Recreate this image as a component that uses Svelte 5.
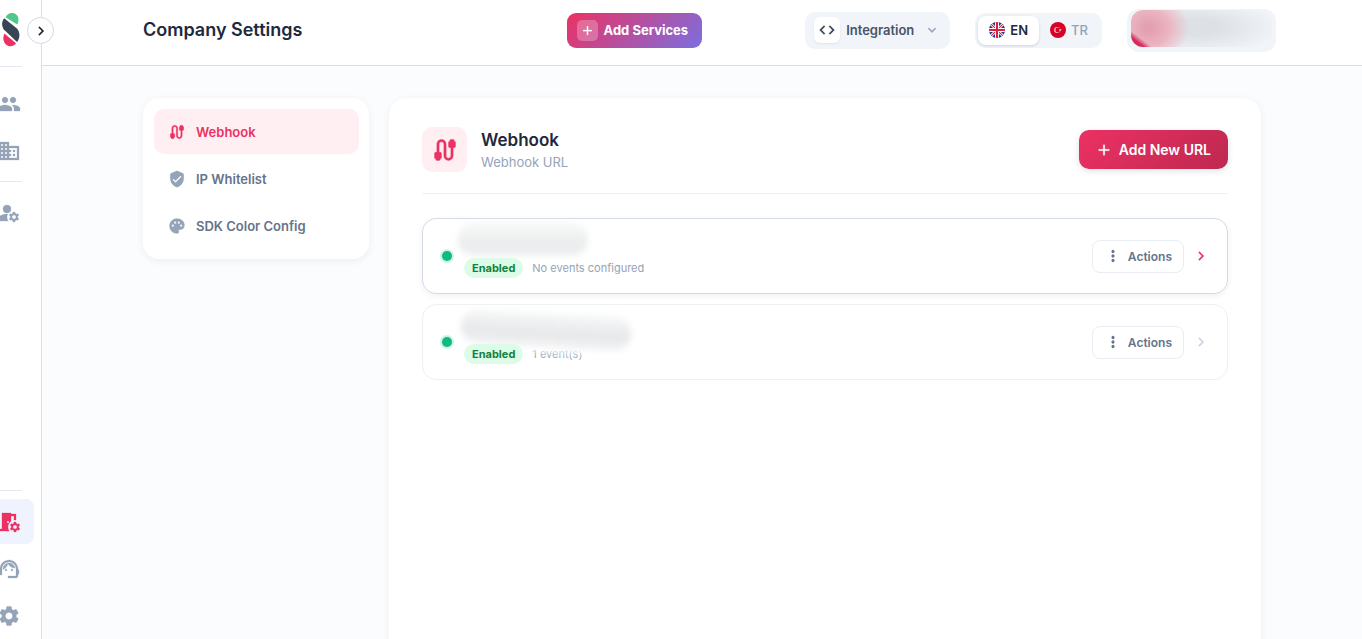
<script>
  const icons = {
    group: 'M16 11c1.66 0 2.99-1.34 2.99-3S17.66 5 16 5c-1.66 0-3 1.34-3 3s1.34 3 3 3zm-8 0c1.66 0 2.99-1.34 2.99-3S9.66 5 8 5C6.34 5 5 6.34 5 8s1.34 3 3 3zm0 2c-2.33 0-7 1.17-7 3.5V19h14v-2.5c0-2.33-4.67-3.5-7-3.5zm8 0c-.29 0-.62.02-.97.05 1.16.84 1.97 1.97 1.97 3.45V19h6v-2.5c0-2.33-4.67-3.5-7-3.5z',
    domain: 'M12 7V3H2v18h20V7H12zM6 19H4v-2h2v2zm0-4H4v-2h2v2zm0-4H4V9h2v2zm0-4H4V5h2v2zm4 12H8v-2h2v2zm0-4H8v-2h2v2zm0-4H8V9h2v2zm0-4H8V5h2v2zm10 12h-8v-2h2v-2h-2v-2h2v-2h-2V9h8v10zm-2-8h-2v2h2v-2zm0 4h-2v2h2v-2z',
    manage: 'M10 4a4 4 0 1 0 0 8 4 4 0 0 0 0-8zM10.67 13.02c-.22-.01-.44-.02-.67-.02-2.42 0-4.68.67-6.61 1.82-.88.52-1.39 1.5-1.39 2.53V20h9.26c-.79-1.13-1.26-2.51-1.26-4 0-1.07.25-2.07.67-2.98zM20.75 16c0-.22-.03-.42-.06-.63l1.14-1.01-1-1.73-1.45.49c-.32-.27-.68-.48-1.08-.63L18 11h-2l-.3 1.49c-.4.15-.76.36-1.08.63l-1.45-.49-1 1.73 1.14 1.01c-.03.21-.06.41-.06.63s.03.42.06.63l-1.14 1.01 1 1.73 1.45-.49c.32.27.68.48 1.08.63L16 21h2l.3-1.49c.4-.15.76-.36 1.08-.63l1.45.49 1-1.73-1.14-1.01c.03-.21.06-.41.06-.63zM17 18c-1.1 0-2-.9-2-2s.9-2 2-2 2 .9 2 2-.9 2-2 2z',
    room: 'M14 11.26V6h3v4h2V4h-5V3H5v16H3v2h9.26c-.79-1.13-1.26-2.51-1.26-4 0-2.38 1.19-4.47 3-5.74zM10 11h2v2h-2v-2zm11.69 5.37l1.14-1-1-1.73-1.45.49c-.32-.27-.68-.48-1.08-.63L19 12h-2l-.3 1.49c-.4.15-.76.36-1.08.63l-1.45-.49-1 1.73 1.14 1c-.08.5-.08.76 0 1.26l-1.14 1 1 1.73 1.45-.49c.32.27.68.48 1.08.63L17 22h2l.3-1.49c.4-.15.76-.36 1.08-.63l1.45.49 1-1.73-1.14-1c.08-.51.08-.77 0-1.27zM18 19c-1.1 0-2-.9-2-2s.9-2 2-2 2 .9 2 2-.9 2-2 2z',
    support: 'M21 12.22C21 6.73 16.74 3 12 3c-4.69 0-9 3.65-9 9.28-.6.34-1 .98-1 1.72v2c0 1.1.9 2 2 2h1v-6.1c0-3.87 3.13-7 7-7s7 3.13 7 7V19h-8v2h8c1.1 0 2-.9 2-2v-1.22c.59-.31 1-.92 1-1.64v-2.3c0-.7-.41-1.31-1-1.62zM9 12a1 1 0 1 0 0 2 1 1 0 0 0 0-2zM15 12a1 1 0 1 0 0 2 1 1 0 0 0 0-2zM18 11.03C17.52 8.18 15.04 6 12.05 6c-3.03 0-6.29 2.51-6.03 6.45 2.47-1.01 4.33-3.21 4.86-5.89 1.31 2.63 4 4.44 7.12 4.47z',
    settings: 'M19.14 12.94c.04-.3.06-.61.06-.94 0-.32-.02-.64-.07-.94l2.03-1.58c.18-.14.23-.41.12-.61l-1.92-3.32c-.12-.22-.37-.29-.59-.22l-2.39.96c-.5-.38-1.03-.7-1.62-.94l-.36-2.54c-.04-.24-.24-.41-.48-.41h-3.84c-.24 0-.43.17-.47.41l-.36 2.54c-.59.24-1.13.57-1.62.94l-2.39-.96c-.22-.08-.47 0-.59.22L2.74 8.87c-.12.21-.08.47.12.61l2.03 1.58c-.05.3-.09.63-.09.94s.02.64.07.94l-2.03 1.58c-.18.14-.23.41-.12.61l1.92 3.32c.12.22.37.29.59.22l2.39-.96c.5.38 1.03.7 1.62.94l.36 2.54c.05.24.24.41.48.41h3.84c.24 0 .44-.17.47-.41l.36-2.54c.59-.24 1.13-.56 1.62-.94l2.39.96c.22.08.47 0 .59-.22l1.92-3.32c.12-.22.07-.47-.12-.61l-2.01-1.58zM12 15.6c-1.98 0-3.6-1.62-3.6-3.6s1.62-3.6 3.6-3.6 3.6 1.62 3.6 3.6-1.62 3.6-3.6 3.6z',
    cable: 'M20 5V4c0-.55-.45-1-1-1h-2c-.55 0-1 .45-1 1v1h-1v4c0 .55.45 1 1 1h1v7c0 1.1-.9 2-2 2s-2-.9-2-2V7c0-2.21-1.79-4-4-4S5 4.79 5 7v7H4c-.55 0-1 .45-1 1v4h1v1c0 .55.45 1 1 1h2c.55 0 1-.45 1-1v-1h1v-4c0-.55-.45-1-1-1H7V7c0-1.1.9-2 2-2s2 .9 2 2v10c0 2.21 1.79 4 4 4s4-1.79 4-4v-7h1c.55 0 1-.45 1-1V5h-1z',
    shield: 'M11.19 1.36l-7 3.11C3.47 4.79 3 5.51 3 6.3V11c0 5.55 3.84 10.74 9 12 5.16-1.26 9-6.45 9-12V6.3c0-.79-.47-1.51-1.19-1.83l-7-3.11c-.51-.23-1.11-.23-1.62 0zM10 17l-4-4 1.41-1.41L10 14.17l6.59-6.59L18 9l-8 8z',
    palette: 'M12 2C6.49 2 2 6.49 2 12s4.49 10 10 10c1.38 0 2.5-1.12 2.5-2.5 0-.61-.23-1.2-.64-1.67-.08-.1-.13-.21-.13-.33 0-.28.22-.5.5-.5H16c3.31 0 6-2.69 6-6 0-4.96-4.49-9-10-9zm-5.5 11c-.83 0-1.5-.67-1.5-1.5S5.67 10 6.5 10 8 10.67 8 11.5 7.33 13 6.5 13zm3-4C8.67 9 8 8.33 8 7.5S8.67 6 9.5 6s1.5.67 1.5 1.5S10.33 9 9.5 9zm5 0c-.83 0-1.5-.67-1.5-1.5S13.67 6 14.5 6s1.5.67 1.5 1.5S15.33 9 14.5 9zm3 4c-.83 0-1.5-.67-1.5-1.5s.67-1.5 1.5-1.5 1.5.67 1.5 1.5-.67 1.5-1.5 1.5z',
    plus: 'M19 13h-6v6h-2v-6H5v-2h6V5h2v6h6v2z',
    code: 'M9.4 16.6 4.8 12l4.6-4.6L8 6l-6 6 6 6 1.4-1.4zm5.2 0 4.6-4.6-4.6-4.6L16 6l6 6-6 6-1.4-1.4z',
    down: 'M7.41 8.59 12 13.17l4.59-4.58L18 10l-6 6-6-6 1.41-1.41z',
    right: 'M10 6 8.59 7.41 13.17 12l-4.58 4.59L10 18l6-6z',
    dots: 'M12 8c1.1 0 2-.9 2-2s-.9-2-2-2-2 .9-2 2 .9 2 2 2zm0 2c-1.1 0-2 .9-2 2s.9 2 2 2 2-.9 2-2-.9-2-2-2zm0 6c-1.1 0-2 .9-2 2s.9 2 2 2 2-.9 2-2-.9-2-2-2z'
  };

  const sections = [
    { icon: 'cable', label: 'Webhook' },
    { icon: 'shield', label: 'IP Whitelist' },
    { icon: 'palette', label: 'SDK Color Config' }
  ];

  const hooks = [
    { status: 'Enabled', events: 'No events configured', selected: true },
    { status: 'Enabled', events: '1 event(s)', selected: false }
  ];

  let section = $state('Webhook');
  let lang = $state('EN');
</script>

{#snippet icon(name, size)}
  <svg width={size} height={size} viewBox="0 0 24 24" fill="currentColor" stroke="currentColor" stroke-width="0.300" aria-hidden="true"><path d={icons[name]} /></svg>
{/snippet}

{#snippet navLink(name, label, active)}
  <a class="nav-link" class:active href="#{name}" aria-label={label}>{@render icon(name, 24)}</a>
{/snippet}

<div class="app">
  <aside class="sidebar">
    <div class="brand">
      <svg width="18" height="36" viewBox="0 0 18 36" aria-hidden="true">
        <path d="M3.500 5.200C5 1.500 9 .300 12 1.200c5 1.700 5.500 7.500 3.200 11.300z" fill="#52c78c" />
        <path d="M2.200 6.200C-.500 9.500-.500 14 1.800 17.500L15 30c3.300-4 3-10 .2-13.300z" fill="#364657" />
        <path d="M2.400 21.500c-2.500 5-.5 11.500 4.800 12.700 3 .5 5.700-1 6.800-2.900z" fill="#ec3163" />
      </svg>
    </div>
    <button class="collapse" aria-label="Expand menu">{@render icon('right', 18)}</button>
    <hr />
    <nav class="upper">
      {@render navLink('group', 'Customers', false)}
      {@render navLink('domain', 'Companies', false)}
      <hr />
      {@render navLink('manage', 'Accounts', false)}
    </nav>
    <nav class="lower">
      <hr />
      {@render navLink('room', 'Company settings', true)}
      {@render navLink('support', 'Support', false)}
      {@render navLink('settings', 'Settings', false)}
    </nav>
  </aside>

  <div class="page">
    <header>
      <h1>Company Settings</h1>
      <button class="services"><span class="plus">{@render icon('plus', 15)}</span>Add Services</button>
      <div class="tools">
        <button class="integration">
          <span class="code">{@render icon('code', 18)}</span>
          Integration
          <span class="caret">{@render icon('down', 16)}</span>
        </button>
        <div class="langs">
          <button class:on={lang === 'EN'} onclick={() => (lang = 'EN')}>
            <svg width="16" height="16" viewBox="0 0 18 18" aria-hidden="true">
              <clipPath id="uk"><circle cx="9" cy="9" r="9" /></clipPath>
              <g clip-path="url(#uk)">
                <rect width="18" height="18" fill="#1f3b8a" />
                <path d="M0 0l18 18M18 0L0 18" stroke="#fff" stroke-width="3" />
                <path d="M0 0l18 18M18 0L0 18" stroke="#d8213f" stroke-width="1.200" />
                <path d="M9 0v18M0 9h18" stroke="#fff" stroke-width="4.500" />
                <path d="M9 0v18M0 9h18" stroke="#d8213f" stroke-width="2.400" />
              </g>
            </svg>
            EN
          </button>
          <button class:on={lang === 'TR'} onclick={() => (lang = 'TR')}>
            <svg width="16" height="16" viewBox="0 0 18 18" aria-hidden="true">
              <circle cx="9" cy="9" r="9" fill="#d80027" />
              <circle cx="8" cy="9" r="3.400" fill="#f6b9c4" />
              <circle cx="8.800" cy="9" r="2.700" fill="#d80027" />
              <path d="M11.500 7.200l.5 1.200 1.300.1-1 .8.300 1.300-1.100-.7-1.100.7.300-1.300-1-.8 1.300-.1z" fill="#f6b9c4" />
            </svg>
            TR
          </button>
        </div>
        <button class="account" aria-label="Account"><span class="veil"></span></button>
      </div>
    </header>

    <main>
      <nav class="menu">
        {#each sections as s}
          <button class:current={section === s.label} onclick={() => (section = s.label)}>
            {@render icon(s.icon, 18)}{s.label}
          </button>
        {/each}
      </nav>

      <section class="panel">
        <div class="panel-head">
          <span class="badge">{@render icon('cable', 28)}</span>
          <div class="titles">
            <h2>Webhook</h2>
            <p>Webhook URL</p>
          </div>
          <button class="add">{@render icon('plus', 18)}Add New URL</button>
        </div>
        <ul>
          {#each hooks as hook}
            <li class:selected={hook.selected}>
              <span class="dot"></span>
              <div class="info">
                <span class="status">{hook.status}</span>
                <span class="events">{hook.events}</span>
              </div>
              <span class="smear"></span>
              <button class="actions">{@render icon('dots', 18)}Actions</button>
              <span class="go">{@render icon('right', 18)}</span>
            </li>
          {/each}
        </ul>
      </section>
    </main>
  </div>
</div>

<style>
  :global(body) {
    margin: 0;
    background: #fbfcfe;
  }
  .app {
    display: flex;
    height: 100vh;
    overflow: hidden;
    font-family: Inter, Roboto, sans-serif;
    font-size: 13px;
    font-weight: 600;
    color: #64748b;
  }
  button {
    font: inherit;
    color: inherit;
    border: 0;
    padding: 0;
    background: none;
    display: flex;
    align-items: center;
    cursor: pointer;
    white-space: nowrap;
  }
  svg {
    display: block;
    flex: none;
  }
  h1, h2, p, ul {
    margin: 0;
    padding: 0;
  }
  hr {
    width: 38px;
    margin: 8px 0;
    border: 0;
    border-top: 1px solid #e5e9ef;
    box-sizing: border-box;
  }

  .sidebar {
    position: relative;
    z-index: 1;
    flex: none;
    width: 41px;
    display: flex;
    flex-direction: column;
    background: #fff;
    border-right: 1px solid #dcdfe4;
  }
  .sidebar > hr {
    margin: 0 0 14px -16px;
  }
  .brand {
    height: 66px;
    padding: 12px 0 0 2px;
    box-sizing: border-box;
  }
  .collapse {
    position: absolute;
    top: 17px;
    right: -13px;
    width: 27px;
    height: 27px;
    justify-content: center;
    box-sizing: border-box;
    border: 1px solid #d5d8dd;
    border-radius: 50%;
    background: #fff;
    color: #1f2937;
  }
  .upper,
  .lower {
    display: flex;
    flex-direction: column;
    width: 50px;
    margin-left: -16px;
  }
  .lower {
    margin-top: auto;
    padding-bottom: 1px;
  }
  .nav-link {
    display: grid;
    place-items: center;
    height: 45px;
    border-radius: 8px;
    color: #94a3b8;
  }
  .nav-link + .nav-link {
    margin-top: 2px;
  }
  .nav-link.active {
    background: #eff3fe;
    color: #ec3163;
  }

  .page {
    flex: 1;
    min-width: 0;
    display: flex;
    flex-direction: column;
  }
  header {
    display: flex;
    align-items: center;
    flex: none;
    height: 66px;
    padding: 0 86px 5px 101px;
    box-sizing: border-box;
    background: #fff;
    border-bottom: 1px solid #dcdfe4;
  }
  h1 {
    flex: 1;
    font-size: 18px;
    line-height: 24px;
    font-weight: 600;
    color: #1e293b;
  }
  .services {
    gap: 6px;
    height: 35px;
    padding: 0 14px 0 10px;
    margin-right: 103px;
    border-radius: 9px;
    background: linear-gradient(135deg, #ec3163, #7b6fe0);
    color: #fff;
    font-weight: 700;
  }
  .plus {
    padding: 3px;
    border-radius: 5px;
    background: rgba(255, 255, 255, 0.25);
  }
  .tools {
    display: flex;
    align-items: center;
    gap: 25px;
  }
  .integration {
    gap: 6px;
    height: 37px;
    padding: 0 10px 0 9px;
    border-radius: 10px;
    background: #f1f4f9;
    color: #475569;
  }
  .code {
    padding: 4px;
    border-radius: 6px;
    background: #fff;
    color: #334155;
    box-shadow: 0 1px 2px rgba(15, 23, 42, 0.08);
  }
  .caret {
    margin-left: 4px;
    color: #94a3b8;
  }
  .langs {
    display: flex;
    padding: 3px;
    border-radius: 10px;
    background: #f1f4f9;
  }
  .langs button {
    gap: 5px;
    height: 29px;
    padding: 0 11px;
    border-radius: 8px;
    color: #94a3b8;
    font-weight: 500;
  }
  .langs .on {
    background: #fff;
    color: #1e293b;
    font-weight: 600;
    box-shadow: 0 1px 3px rgba(15, 23, 42, 0.14);
  }
  .account {
    width: 149px;
    height: 43px;
    padding: 1px 4px 5px;
    box-sizing: border-box;
    border-radius: 12px;
    background: #f1f4f9;
  }
  .veil {
    flex: 1;
    height: 37px;
    border-radius: 12px;
    background:
      linear-gradient(38deg, #d42a5c 8px, transparent 13px),
      radial-gradient(ellipse 40px 36px at 18px 18px, #e3a0b1 10%, #ecb4c1 50%, transparent),
      radial-gradient(ellipse 85px 28px at 64px 17px, #dde1e6 30%, transparent);
  }

  main {
    flex: 1;
    display: flex;
    align-items: flex-start;
    gap: 20px;
    min-height: 0;
    padding: 32px 101px 0;
  }
  .menu {
    flex: none;
    width: 226px;
    display: flex;
    flex-direction: column;
    gap: 2px;
    padding: 11px 10px 11px 11px;
    box-sizing: border-box;
    border-radius: 16px;
    background: #fff;
    box-shadow: 0 2px 8px rgba(15, 23, 42, 0.06);
  }
  .menu button {
    gap: 10px;
    height: 45px;
    padding: 0 14px;
    border-radius: 10px;
  }
  .menu button :global(svg) {
    color: #94a3b8;
  }
  .menu .current {
    background: #ffeff2;
    color: #ec3163;
  }
  .menu .current :global(svg) {
    color: #ec3163;
  }

  .panel {
    flex: 1;
    min-width: 0;
    min-height: 100vh;
    padding: 29px 33px;
    box-sizing: border-box;
    border-radius: 18px;
    background: #fff;
    box-shadow: 0 2px 8px rgba(15, 23, 42, 0.06);
  }
  .panel-head {
    display: flex;
    align-items: center;
    gap: 14px;
    padding-bottom: 21px;
    border-bottom: 1px solid #eef1f5;
  }
  .badge {
    display: grid;
    place-items: center;
    width: 45px;
    height: 45px;
    border-radius: 10px;
    background: #ffeff2;
    color: #ec3163;
  }
  .titles {
    flex: 1;
  }
  h2 {
    font-size: 17px;
    line-height: 24px;
    font-weight: 600;
    color: #1e293b;
  }
  p {
    line-height: 20px;
    font-weight: 400;
    color: #94a3b8;
  }
  .add {
    gap: 6px;
    height: 39px;
    padding: 0 17px 0 16px;
    border-radius: 10px;
    background: linear-gradient(135deg, #ec3163, #be2850);
    color: #fff;
    font-size: 14px;
    box-shadow: 0 2px 6px rgba(15, 23, 42, 0.12);
  }
  ul {
    display: flex;
    flex-direction: column;
    gap: 10px;
    margin-top: 24px;
    list-style: none;
  }
  li {
    position: relative;
    display: flex;
    align-items: center;
    height: 76px;
    padding: 0 17px 0 16px;
    box-sizing: border-box;
    border: 1px solid #edf0f4;
    border-radius: 14px;
  }
  li.selected {
    border-color: #d3dae4;
    box-shadow: 0 2px 6px rgba(15, 23, 42, 0.06);
  }
  .dot {
    width: 10px;
    height: 10px;
    margin: 0 10px 0 3px;
    border-radius: 50%;
    background: #10b981;
    box-shadow: 0 0 0 2px #c9f5df;
  }
  .info {
    flex: 1;
    display: flex;
    align-items: center;
    gap: 9px;
    margin: 24px 0 0 2px;
    font-size: 11px;
  }
  .status {
    position: relative;
    z-index: 1;
    padding: 0 8px;
    line-height: 20px;
    border-radius: 10px;
    background: #dcfce7;
    color: #15803d;
    font-weight: 700;
  }
  .events {
    font-weight: 400;
    color: #94a3b8;
  }
  .smear {
    position: absolute;
    top: 8px;
    left: 38px;
    width: 170px;
    height: 34px;
    border-radius: 16px;
    background: linear-gradient(#f8f8f8, #e7e8ea 60%, #f3f3f4);
    box-shadow: 0 5px 0 #fff;
    filter: blur(3px);
    transform: rotate(3deg);
  }
  .selected .smear {
    top: 3px;
    left: 35px;
    width: 130px;
    box-shadow: none;
    transform: none;
    background: linear-gradient(#fafafa, #eaeced 65%, #f0f2f1);
  }
  .actions {
    gap: 6px;
    height: 33px;
    padding: 0 11px;
    margin-right: 8px;
    border: 1px solid #e8edf3;
    border-radius: 8px;
    font-size: 12px;
    box-sizing: border-box;
  }
  .go {
    color: #cbd5e1;
  }
  .selected .go {
    color: #ec3163;
  }
</style>
